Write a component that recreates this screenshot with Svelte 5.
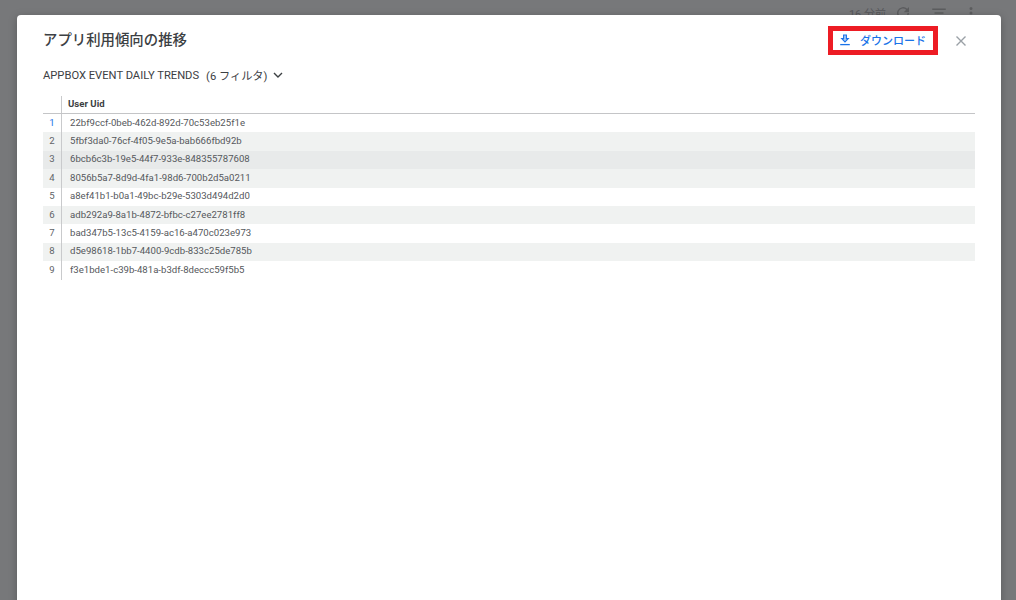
<script lang="ts">
  const rows = [
    '22bf9ccf-0beb-462d-892d-70c53eb25f1e',
    '5fbf3da0-76cf-4f05-9e5a-bab666fbd92b',
    '6bcb6c3b-19e5-44f7-933e-848355787608',
    '8056b5a7-8d9d-4fa1-98d6-700b2d5a0211',
    'a8ef41b1-b0a1-49bc-b29e-5303d494d2d0',
    'adb292a9-8a1b-4872-bfbc-c27ee2781ff8',
    'bad347b5-13c5-4159-ac16-a470c023e973',
    'd5e98618-1bb7-4400-9cdb-833c25de785b',
    'f3e1bde1-c39b-481a-b3df-8deccc59f5b5',
  ];
</script>

<div class="page">
  <!-- dimmed page behind the dialog -->
  <div class="behind">
    <span class="age">16 分前</span>
    <svg class="bicon" width="18" height="18" viewBox="0 0 24 24"><path d="M17.6 6.4A8 8 0 1 0 20 12h-2a6 6 0 1 1-1.8-4.2L13 11h7V4z" fill="#5c5d5f"/></svg>
    <svg class="bicon wide" width="18" height="18" viewBox="0 0 24 24"><path d="M3 6h18v2H3zm3 5h12v2H6zm4 5h4v2h-4z" fill="#5c5d5f"/></svg>
    <svg class="bicon" width="18" height="18" viewBox="0 0 24 24"><path d="M12 8a2 2 0 1 0 0-4 2 2 0 0 0 0 4zm0 2a2 2 0 1 0 0 4 2 2 0 0 0 0-4zm0 6a2 2 0 1 0 0 4 2 2 0 0 0 0-4z" fill="#5c5d5f"/></svg>
  </div>

  <div class="dialog">
    <div class="head">
      <h2>アプリ利用傾向の推移</h2>
      <div class="highlight">
        <button class="download">
          <svg width="14" height="14" viewBox="0 0 14 14"><path d="M5.6 2h2.8v3.6h1.9L7 9 3.7 5.6h1.9z" fill="#a9cbf7" stroke="#1a73e8" stroke-width="1.1"/><path d="M2.2 11.6h9.6" stroke="#1a73e8" stroke-width="1.3"/></svg>
          <span class="label">ダウンロード</span>
        </button>
      </div>
      <button class="close" aria-label="close">
        <svg width="12" height="12" viewBox="0 0 12 12"><path d="M1.5 1.5l9 9M10.5 1.5l-9 9" stroke="#9aa0a6" stroke-width="1.4" fill="none"/></svg>
      </button>
    </div>

    <div class="subtitle">
      <span>APPBOX EVENT DAILY TRENDS</span>
      <span class="filters">(6 フィルタ)</span>
      <svg width="10" height="7" viewBox="0 0 10 7"><path d="M1 1l4 4 4-4" stroke="#3c4043" stroke-width="1.4" fill="none"/></svg>
    </div>

    <div class="table">
      <div class="tr th">
        <div class="num"></div>
        <div class="cell">User Uid</div>
      </div>
      {#each rows as uid, i}
        <div class="tr" class:odd={i % 2 === 1} class:hover={i === 2}>
          <div class="num" class:first={i === 0}>{i + 1}</div>
          <div class="cell">{uid}</div>
        </div>
      {/each}
    </div>
  </div>
</div>

<style>
  :global(body) { margin: 0; }

  .page {
    position: relative;
    width: 1016px;
    height: 600px;
    overflow: hidden;
    background: #77787a;
    font-family: Roboto, "Noto Sans CJK JP", sans-serif;
    color: #3c4043;
  }

  .behind {
    display: flex;
    justify-content: flex-end;
    align-items: center;
    gap: 8px;
    height: 25px;
    padding-right: 36px;
    color: #56575a;
    font-size: 11px;
  }
  .bicon.wide { margin: 0 6px 0 10px; }

  .dialog {
    position: absolute;
    left: 17px;
    top: 15px;
    width: 984px;
    height: 600px;
    box-sizing: border-box;
    padding: 0 26px;
    background: #fff;
    border-radius: 4px;
    box-shadow: 0 2px 8px rgba(0, 0, 0, 0.25);
  }

  .head {
    display: flex;
    align-items: center;
    height: 50px;
  }
  h2 {
    flex: 1;
    margin: 0 0 3px;
    font-size: 14.4px;
    font-weight: 500;
    color: #3c4043;
  }

  .highlight {
    display: flex;
    align-items: center;
    box-sizing: border-box;
    width: 110px;
    height: 29px;
    margin: 0 17px 0 0;
    border: 5px solid #ed1c24;
  }
  .download {
    display: flex;
    align-items: center;
    gap: 8px;
    padding: 0 0 0 5px;
    border: 0;
    background: none;
    color: #1a73e8;
    font-family: inherit;
    font-size: 11px;
    font-weight: 500;
    white-space: nowrap;
  }
  .label { margin-bottom: 1px; }

  .close {
    display: flex;
    width: 12px;
    height: 12px;
    margin: 2px 8px 0 0;
    padding: 0;
    border: 0;
    background: none;
  }

  .subtitle {
    display: flex;
    align-items: center;
    height: 20px;
    font-size: 11.2px;
    margin-bottom: 11px;
    color: #3c4043;
  }
  .filters { margin: 0 6px 0 7px; }

  .table { width: 932px; font-size: 9.6px; }

  .tr {
    display: flex;
    height: 18.4px;
    align-items: stretch;
  }
  .tr.th { height: 17px; border-bottom: 1px solid #c4c5c7; font-weight: 700; }
  .tr.th .cell { padding-left: 6px; }
  .tr.odd { background: #f0f2f1; }
  .tr.hover { background: #e8eaea; }

  .num {
    display: flex;
    align-items: center;
    justify-content: center;
    box-sizing: border-box;
    width: 19px;
    padding-bottom: 2px;
    border-right: 1px solid #c9cacc;
    color: #5f6368;
  }
  .num.first { color: #1a73e8; }

  .cell {
    display: flex;
    align-items: center;
    padding-left: 8px;
    padding-bottom: 2px;
    color: #55585c;
  }
  .th .cell { color: #3c4043; }
</style>
